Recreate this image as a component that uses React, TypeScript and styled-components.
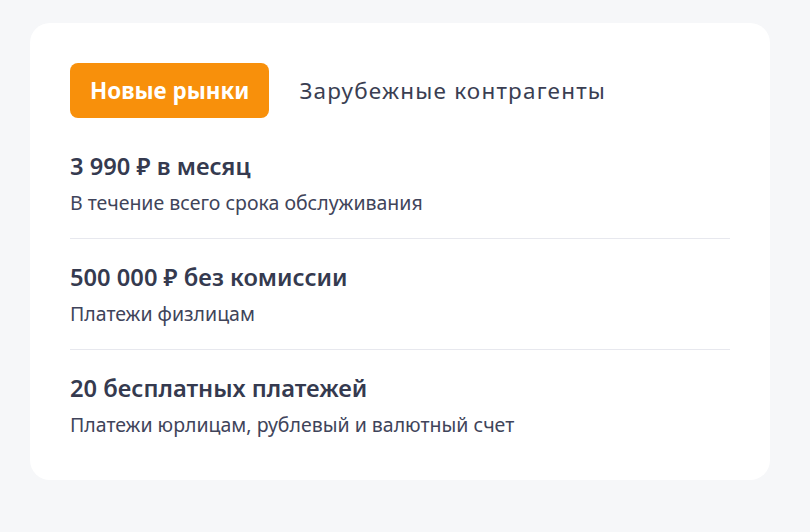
import React from 'react';
import styled, { createGlobalStyle } from 'styled-components';

const GlobalStyle = createGlobalStyle`
  body {
    margin: 0;
    background: #f6f7f9;
    font-family: 'Noto Sans', 'Open Sans', sans-serif;
    color: #353a4f;
  }
`;

const items = [
  { title: '3 990 ₽ в месяц', text: 'В течение всего срока обслуживания' },
  { title: '500 000 ₽ без комиссии', text: 'Платежи физлицам' },
  { title: '20 бесплатных платежей', text: 'Платежи юрлицам, рублевый и валютный счет' },
];

const tabs = ['Новые рынки', 'Зарубежные контрагенты'];

const App: React.FC = () => {
  const [active, setActive] = React.useState(0);

  return (
    <Page>
      <GlobalStyle />
      <Card>
        <Tabs>
          {tabs.map((tab, i) => (
            <Tab key={tab} active={i === active} onClick={() => setActive(i)}>
              {tab}
            </Tab>
          ))}
        </Tabs>
        <List>
          {items.map(({ title, text }) => (
            <Item key={title}>
              <Title>{title}</Title>
              <Text>{text}</Text>
            </Item>
          ))}
        </List>
      </Card>
    </Page>
  );
};

export default App;

const Page = styled.div`
  padding: 23px 40px 52px 30px;
`;

const Card = styled.div`
  width: 660px;
  background: #ffffff;
  border-radius: 20px;
  padding: 40px 40px 42px;
`;

const Tabs = styled.div`
  display: flex;
  align-items: center;
  gap: 10px;
`;

const Tab = styled.button<{ active: boolean }>`
  height: 55px;
  padding: 0 20px;
  border: none;
  border-radius: 8px;
  background: ${({ active }) => (active ? '#f8900b' : 'transparent')};
  color: ${({ active }) => (active ? '#ffffff' : '#3a3e52')};
  font-family: inherit;
  font-size: ${({ active }) => (active ? '22.4px' : '22.5px')};
  letter-spacing: ${({ active }) => (active ? '0' : '1.2px')};
  font-weight: ${({ active }) => (active ? 700 : 400)};
  cursor: pointer;
`;

const List = styled.div`
  margin-top: 10px;
`;

const Item = styled.div`
  padding: 23px 0 22px;
  border-bottom: 1px solid #e7e8ee;

  &:last-child {
    padding-bottom: 0;
    border-bottom: none;
  }
`;

const Title = styled.div`
  font-size: 23.7px;
  line-height: 30px;
  font-weight: 600;
  color: #353a4f;
`;

const Text = styled.div`
  margin-top: 9px;
  font-size: 19.5px;
  line-height: 26px;
  color: #40445a;
`;
